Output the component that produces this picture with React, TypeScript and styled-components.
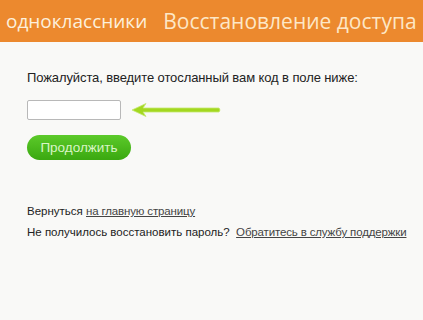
import React from 'react';
import styled, { createGlobalStyle } from 'styled-components';

const GlobalStyle = createGlobalStyle`
  html, body {
    margin: 0;
    padding: 0;
    background: #f9f9f7;
  }
  body {
    font-family: 'Liberation Sans', Arial, sans-serif;
  }
`;

const App = () => {
  return (
    <Page>
      <GlobalStyle />
      <Header>
        <Brand>одноклассники</Brand>
        <Title>Восстановление доступа</Title>
      </Header>
      <Content>
        <Prompt>Пожалуйста, введите отосланный вам код в поле ниже:</Prompt>
        <CodeRow>
          <CodeInput type="text" />
          <Arrow width="92" height="16" viewBox="0 0 92 16">
            <path
              d="M2 8 L16 1.5 L13 6 L89 6 Q91 8 89 10 L13 10 L16 14.5 Z"
              fill="#a3d81f"
              stroke="#c4e870"
              strokeWidth="0.8"
              strokeLinejoin="round"
            />
          </Arrow>
        </CodeRow>
        <ContinueButton>Продолжить</ContinueButton>
        <Links>
          <Line>
            Вернуться <Link href="#">на главную страницу</Link>
          </Line>
          <Line>
            Не получилось восстановить пароль?&nbsp; <Link href="#">Обратитесь в службу поддержки</Link>
          </Line>
        </Links>
      </Content>
    </Page>
  );
};

const Page = styled.div`
  width: 423px;
  height: 320px;
  background: #f9f9f7;
  overflow: hidden;
`;

const Header = styled.div`
  height: 42px;
  background: #ec892e;
  display: flex;
  align-items: center;
  padding: 0 6px;
  gap: 16px;
  white-space: nowrap;
`;

const Brand = styled.span`
  color: #fdf0dc;
  font-family: 'Open Sans', sans-serif;
  font-size: 19px;
`;

const Title = styled.span`
  color: #fde7c6;
  font-family: 'Open Sans', sans-serif;
  font-size: 21px;
`;

const Content = styled.div`
  padding: 28px 27px 0;
  display: flex;
  flex-direction: column;
  align-items: flex-start;
`;

const Prompt = styled.div`
  font-size: 13px;
  letter-spacing: -0.1px;
  color: #222;
`;

const CodeRow = styled.div`
  display: flex;
  align-items: center;
  margin-top: 15px;
  gap: 9px;
`;

const CodeInput = styled.input`
  box-sizing: border-box;
  width: 94px;
  height: 20px;
  border: 1px solid #b8b8b8;
  border-radius: 2px;
  background: #fff;
  outline: none;
`;

const Arrow = styled.svg`
  display: block;
`;

const ContinueButton = styled.button`
  margin-top: 15px;
  width: 104px;
  height: 25px;
  border: none;
  border-radius: 13px;
  background: linear-gradient(#5cca2a, #3aa810);
  color: #d9f5c6;
  font-family: 'Liberation Sans', Arial, sans-serif;
  font-size: 13.5px;
  padding: 0;
`;

const Links = styled.div`
  margin-top: 45px;
  display: flex;
  flex-direction: column;
  gap: 9px;
`;

const Line = styled.div`
  font-size: 11.5px;
  color: #222;
  white-space: nowrap;
`;

const Link = styled.a`
  color: #444;
  letter-spacing: -0.15px;
  text-decoration: underline;
`;

export default App;
